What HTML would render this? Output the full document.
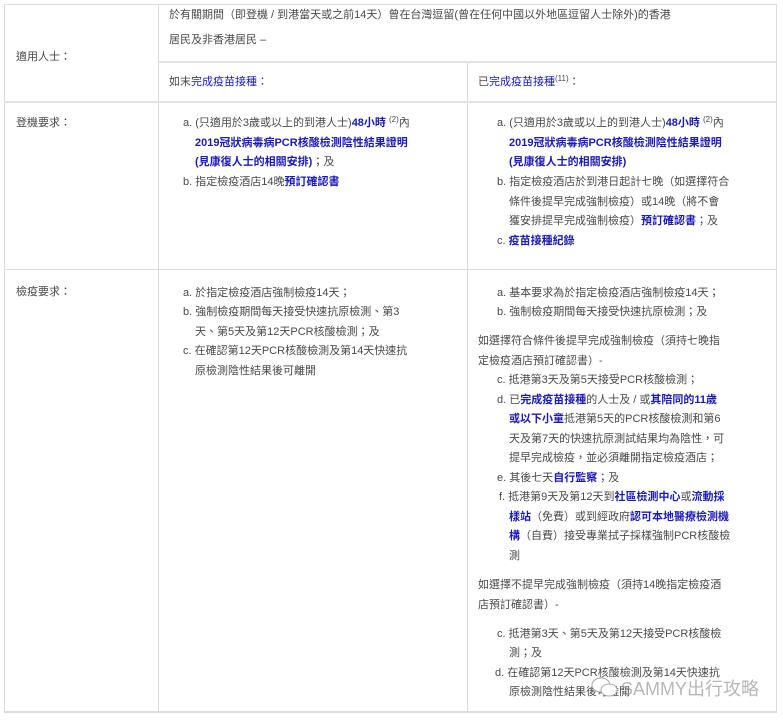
<!DOCTYPE html>
<html><head><meta charset="utf-8">
<style>
html,body{margin:0;padding:0;background:#fff;}
body{width:783px;height:720px;position:relative;overflow:hidden;font-family:"Liberation Sans","Noto Sans CJK TC",sans-serif;font-size:11px;color:#4a4a4a;}
.l{position:absolute;white-space:nowrap;line-height:20px;height:20px;}
.b{color:#1a1ac0;font-weight:600;}
.h{position:absolute;background:#dcdcdc;}
sup{font-size:8px;vertical-align:0;position:relative;top:-4px;}
.wm{position:absolute;top:675px;font-size:18px;color:#999;opacity:.7;white-space:nowrap;}
</style></head><body>
<div class="h" style="left:4px;top:4px;width:773px;height:1px"></div>
<div class="h" style="left:4px;top:4px;width:1px;height:709px"></div>
<div class="h" style="left:776px;top:4px;width:1px;height:709px"></div>
<div class="h" style="left:4px;top:711px;width:773px;height:2px"></div>
<div class="h" style="left:158px;top:4px;width:1px;height:709px"></div>
<div class="h" style="left:467px;top:62px;width:1px;height:651px"></div>
<div class="h" style="left:158px;top:61px;width:619px;height:2px;background:#e2e2e2"></div>
<div class="h" style="left:4px;top:101px;width:773px;height:2px;background:#e2e2e2"></div>
<div class="h" style="left:4px;top:269px;width:773px;height:1px"></div>

<div class="l" style="left:16px;top:47px">適用人士：</div>
<div class="l" style="left:16px;top:113px">登機要求：</div>
<div class="l" style="left:16px;top:282px">檢疫要求：</div>

<div class="l" style="left:169px;top:5px">於有關期間（即登機 / 到港當天或之前14天）曾在台灣逗留(曾在任何中國以外地區逗留人士除外)的香港</div>
<div class="l" style="left:169px;top:30px">居民及非香港居民 –</div>
<div class="l" style="left:169px;top:72px">如末<span class="b" style="font-weight:normal">完成疫苗接種</span>：</div>
<div class="l" style="left:478px;top:72px">已<span class="b" style="font-weight:normal">完成疫苗接種</span><sup>(11)</sup>：</div>

<div class="l" style="left:183px;top:113px">a. (只適用於3歲或以上的到港人士)<span class="b">48小時</span> <sup>(2)</sup>內</div>
<div class="l b" style="left:195px;top:133px">2019冠狀病毒病PCR核酸檢測陰性結果證明</div>
<div class="l" style="left:195px;top:152px"><span class="b">(見康復人士的相關安排)</span>；及</div>
<div class="l" style="left:183px;top:172px">b. 指定檢疫酒店14晚<span class="b">預訂確認書</span></div>

<div class="l" style="left:497px;top:113px">a. (只適用於3歲或以上的到港人士)<span class="b">48小時</span> <sup>(2)</sup>內</div>
<div class="l b" style="left:509px;top:133px">2019冠狀病毒病PCR核酸檢測陰性結果證明</div>
<div class="l b" style="left:509px;top:152px">(見康復人士的相關安排)</div>
<div class="l" style="left:497px;top:172px">b. 指定檢疫酒店於到港日起計七晚（如選擇符合</div>
<div class="l" style="left:509px;top:192px">條件後提早完成強制檢疫）或14晚（將不會</div>
<div class="l" style="left:509px;top:211px">獲安排提早完成強制檢疫）<span class="b">預訂確認書</span>；及</div>
<div class="l" style="left:497px;top:231px">c. <span class="b">疫苗接種紀錄</span></div>

<div class="l" style="left:183px;top:283px">a. 於指定檢疫酒店強制檢疫14天；</div>
<div class="l" style="left:183px;top:302px">b. 強制檢疫期間每天接受快速抗原檢測、第3</div>
<div class="l" style="left:195px;top:322px">天、第5天及第12天PCR核酸檢測；及</div>
<div class="l" style="left:183px;top:341px">c. 在確認第12天PCR核酸檢測及第14天快速抗</div>
<div class="l" style="left:195px;top:361px">原檢測陰性結果後可離開</div>

<div class="l" style="left:497px;top:283px">a. 基本要求為於指定檢疫酒店強制檢疫14天；</div>
<div class="l" style="left:497px;top:302px">b. 強制檢疫期間每天接受快速抗原檢測；及</div>
<div class="l" style="left:478px;top:331px">如選擇符合條件後提早完成強制檢疫（須持七晚指</div>
<div class="l" style="left:478px;top:351px">定檢疫酒店預訂確認書）-</div>
<div class="l" style="left:497px;top:370px">c. 抵港第3天及第5天接受PCR核酸檢測；</div>
<div class="l" style="left:497px;top:390px">d. 已<span class="b">完成疫苗接種</span>的人士及 / 或<span class="b">其陪同的11歲</span></div>
<div class="l" style="left:509px;top:409px"><span class="b">或以下小童</span>抵港第5天的PCR核酸檢測和第6</div>
<div class="l" style="left:509px;top:429px">天及第7天的快速抗原測試結果均為陰性，可</div>
<div class="l" style="left:509px;top:448px">提早完成檢疫，並必須離開指定檢疫酒店；</div>
<div class="l" style="left:497px;top:468px">e. 其後七天<span class="b">自行監察</span>；及</div>
<div class="l" style="left:499px;top:487px">f. 抵港第9天及第12天到<span class="b">社區檢測中心</span>或<span class="b">流動採</span></div>
<div class="l" style="left:509px;top:507px"><span class="b">樣站</span>（免費）或到經政府<span class="b">認可本地醫療檢測機</span></div>
<div class="l" style="left:509px;top:526px"><span class="b">構</span>（自費）接受專業拭子採樣強制PCR核酸檢</div>
<div class="l" style="left:509px;top:546px">測</div>
<div class="l" style="left:478px;top:575px">如選擇不提早完成強制檢疫（須持14晚指定檢疫酒</div>
<div class="l" style="left:478px;top:595px">店預訂確認書）-</div>
<div class="l" style="left:497px;top:624px">c. 抵港第3天、第5天及第12天接受PCR核酸檢</div>
<div class="l" style="left:509px;top:643px">測；及</div>
<div class="l" style="left:495px;top:663px">d. 在確認第12天PCR核酸檢測及第14天快速抗</div>
<div class="l" style="left:509px;top:682px">原檢測陰性結果後可離開</div>

<svg style="position:absolute;left:590px;top:676px" width="30" height="24" viewBox="0 0 30 24">
<ellipse cx="11" cy="9" rx="9" ry="7" fill="#fff" stroke="#aaa" stroke-width="1"/>
<ellipse cx="19" cy="14" rx="8" ry="6" fill="#fff" stroke="#aaa" stroke-width="1"/>
</svg>
<div class="wm" style="left:621px">SAMMY出行攻略</div>
</body></html>
